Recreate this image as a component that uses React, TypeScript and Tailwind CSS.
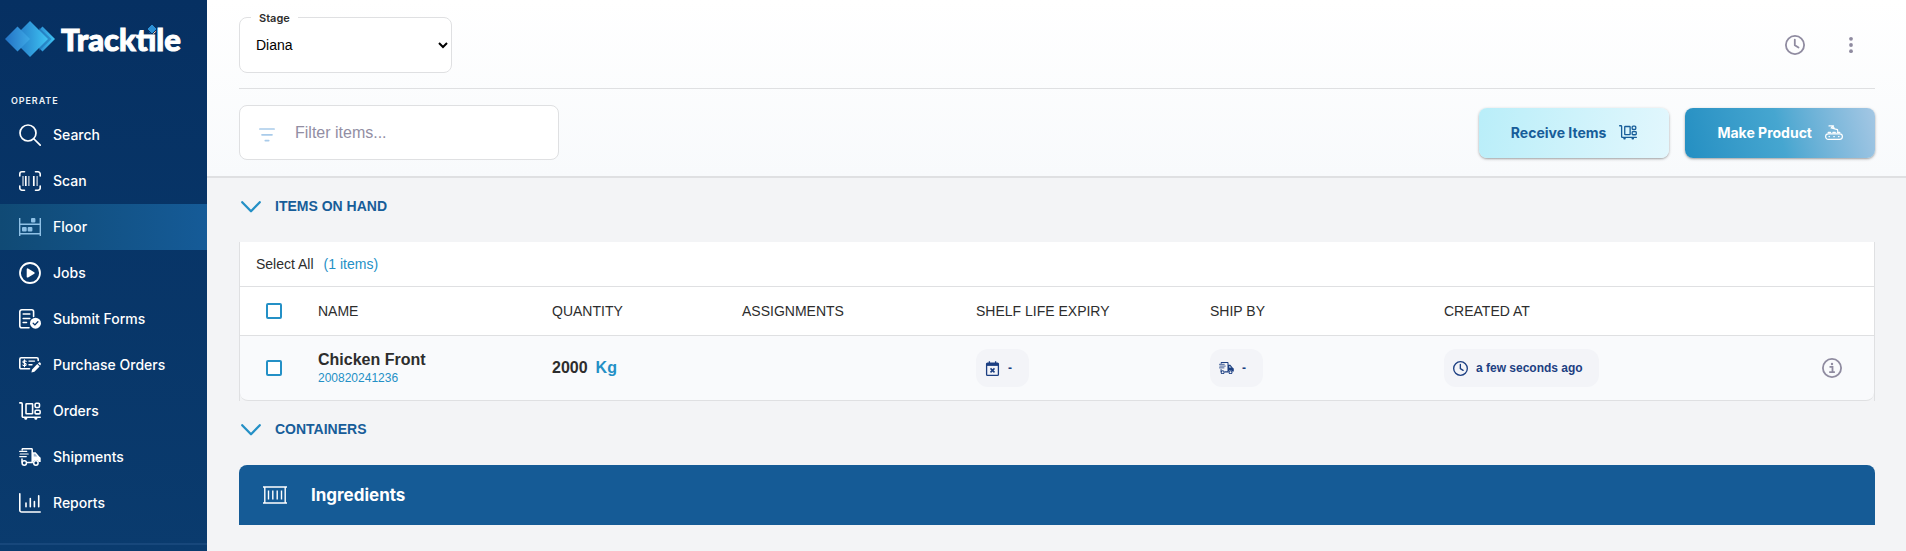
import type { ReactNode } from "react";

type IconProps = { className?: string };

function SearchIcon() {
  return (
    <svg viewBox="0 0 22 22" className="w-[22px]" fill="none" stroke="currentColor" strokeWidth="1.7" strokeLinecap="round">
      <circle cx="9" cy="9" r="8" />
      <path d="M15 15l6.2 6.2" />
    </svg>
  );
}

function ScanIcon() {
  return (
    <svg viewBox="0 0 22 20" className="w-[22px]" fill="none" stroke="currentColor">
      <path
        d="M.8 5V3A2.2 2.2 0 0 1 3 .8h2.5M16.5.8H19A2.2 2.2 0 0 1 21.2 3v2M21.2 15v2a2.2 2.2 0 0 1-2.2 2.2h-2.5M5.5 19.2H3A2.2 2.2 0 0 1 .8 17v-2"
        strokeWidth="1.6"
        strokeLinecap="round"
      />
      <path d="M4 5v10M9.9 5v10M18.1 5v10" strokeWidth="1" />
      <path d="M6.8 5v10M14.8 5v10" strokeWidth="1.7" />
    </svg>
  );
}

function FloorIcon() {
  return (
    <svg viewBox="0 0 22 18" className="w-[22px] text-[#8fc1e6]" fill="currentColor">
      <path d="M0 0h1.4v18H0zM20.6 0H22v18h-1.4z" />
      <path d="M1 5.6h20v1.3H1zM1 15h20v1.4H1z" />
      <rect x="12" y="0" width="4.4" height="4.6" rx="1" />
      <rect x="3" y="9" width="4.7" height="4.6" rx="1" />
      <rect x="8.7" y="9" width="4.7" height="4.6" rx="1" />
    </svg>
  );
}

function JobsIcon() {
  return (
    <svg viewBox="0 0 22 22" className="w-[22px]" fill="none" stroke="currentColor" strokeWidth="1.8">
      <circle cx="11" cy="11" r="10" />
      <path d="M8.6 7.3v7.4l6.2-3.7z" fill="currentColor" strokeLinejoin="round" />
    </svg>
  );
}

function FormsIcon() {
  return (
    <svg viewBox="0 0 22 20" className="w-[22px]" fill="none" stroke="currentColor" strokeWidth="1.6" strokeLinecap="round">
      <path d="M10 18.8H2.8a2 2 0 0 1-2-2v-14a2 2 0 0 1 2-2h9.8a2 2 0 0 1 2 2v4.7" />
      <path d="M4.2 5h6.6M4.2 9.5h6.6M4.2 13.5h3.3" />
      <circle cx="16.5" cy="14.2" r="5.5" fill="currentColor" stroke="none" />
      <path d="M14.2 14.3l1.7 1.6 3-3.2" stroke="#08356a" strokeWidth="1.3" />
    </svg>
  );
}

function PurchaseIcon() {
  return (
    <svg viewBox="0 0 22 16" className="w-[22px]" fill="none" stroke="currentColor" strokeWidth="1.6" strokeLinecap="round">
      <path d="M10.5 11.8H2.2A1.4 1.4 0 0 1 .8 10.4V2.2A1.4 1.4 0 0 1 2.2.8h15.6a1.4 1.4 0 0 1 1.4 1.4v1.3" />
      <path d="M7.2 4.3C6.6 3.6 4 3.3 3.9 4.9c0 1.6 3.3.9 3.3 2.6 0 1.5-2.7 1.4-3.4.5M5.5 2.8v7" strokeWidth="1.1" />
      <path d="M10 4.1h5.5M10 7.8h3" strokeWidth="1.4" />
      <path d="M12.4 15.6l.7-3.2 5.2-5.3 2.3 2.3-5.2 5.3zM19 6.4l.9-.9c.8-.6 2.5.9 1.9 1.9l-.7 1z" fill="currentColor" stroke="none" />
    </svg>
  );
}

function CartIcon({ className = "w-[22px]" }: IconProps) {
  return (
    <svg viewBox="0 0 22 18" className={className} fill="none" stroke="currentColor" strokeWidth="1.6" strokeLinecap="round">
      <path d="M.8.9h1.4a1 1 0 0 1 1 1v12.3a1 1 0 0 0 1 1h17" />
      <rect x="7" y="1.8" width="6.6" height="10" rx=".6" />
      <rect x="16.1" y="1.3" width="4.4" height="4.2" rx="1.2" />
      <rect x="16.1" y="8.2" width="5" height="3.7" rx="1" />
      <path d="M6.3 16.6h.9M16.4 16.6h.9" strokeWidth="2.2" />
    </svg>
  );
}

function TruckIcon({ className = "w-[22px]" }: IconProps) {
  return (
    <svg viewBox="0 0 22 18" className={className} fill="none" stroke="currentColor" strokeWidth="1.5" strokeLinecap="round">
      <path d="M3.2 2V1.4a.7.7 0 0 1 .7-.7h8.5a.8.8 0 0 1 .8.8v13H8.6M3 11v3" />
      <path d="M.7 3.4h7M1.2 6h8M.7 8.6h6.6" strokeWidth="1.2" />
      <path d="M13.2 4.2h3.4l3.9 4.6 1.2.9V14h-2a3 3 0 0 0-5.5-.5l-1 .5z" fill="currentColor" stroke="none" />
      <path d="M14.7 5.7h1.5l2.2 2.7h-3.7z" fill="#9fb6cf" stroke="none" />
      <circle cx="5.3" cy="15" r="2.2" />
      <circle cx="16.9" cy="15" r="2.2" />
    </svg>
  );
}

function ReportsIcon() {
  return (
    <svg viewBox="0 0 22 20" className="w-[22px]" fill="none" stroke="currentColor" strokeWidth="1.6" strokeLinecap="round">
      <path d="M.8.8v16.4a1.8 1.8 0 0 0 1.8 1.8h18.6" />
      <path d="M7 10v3.8M11.3 5.5v8.3M15.4 8.5v5.3M19.7 2.8v11" />
    </svg>
  );
}

function ConveyorIcon() {
  return (
    <svg viewBox="0 0 18 15" className="w-[18px]" fill="none" stroke="currentColor" strokeWidth="1.2" strokeLinecap="round">
      <rect x=".6" y="8.8" width="16.8" height="5.6" rx="2.8" />
      <path d="M4 11.6h.5M8.8 11.6h.5M13.5 11.6h.5" strokeWidth="1.3" />
      <path d="M4 .9h4L6.3 3l6.2 1.6M8 .9l1.3 2.6M12.5 4.6l.3 2" />
      <path d="M3.3 7.4h2.2M8 7.4h2.2M12.5 7.4h2.2" strokeWidth="1.5" />
    </svg>
  );
}

function ClockIcon({ className }: IconProps) {
  return (
    <svg viewBox="0 0 20 20" className={className} fill="none" stroke="currentColor" strokeWidth="1.8" strokeLinecap="round" strokeLinejoin="round">
      <circle cx="10" cy="10" r="9.1" />
      <path d="M9.8 4.6v5.6l3.7 2.3" />
    </svg>
  );
}

function CalendarIcon() {
  return (
    <svg viewBox="0 0 13 15" className="size-[15px]" fill="none" stroke="currentColor" strokeWidth="1.3">
      <rect x=".6" y="2.1" width="11.8" height="12.2" rx=".9" />
      <path d="M.6 2h11.8v2.9H.6z" fill="currentColor" stroke="none" />
      <path d="M3.4.3v2M9.6.3v2" />
      <path d="M4.5 7.4l4 4M8.5 7.4l-4 4" strokeWidth="1.5" />
    </svg>
  );
}

function InfoIcon() {
  return (
    <svg viewBox="0 0 20 20" className="w-5" fill="none" stroke="currentColor" strokeWidth="1.8">
      <circle cx="10" cy="10" r="9.1" />
      <path d="M7.5 8.8h3v5.3M7.2 14.2h5.7" />
      <circle cx="10" cy="6" r="1.2" fill="currentColor" stroke="none" />
    </svg>
  );
}

function ContainerIcon() {
  return (
    <svg viewBox="0 0 24 18" className="w-6" fill="none" stroke="currentColor" strokeWidth="1.4">
      <path d="M0 1h24M0 17h24M1.8 1v16M22.2 1v16" />
      <path d="M5.5 4.5v9M9.8 4.5v9M14.2 4.5v9M18.5 4.5v9" />
    </svg>
  );
}

function Logo() {
  return (
    <svg viewBox="0 0 50 36" className="w-[50px] shrink-0">
      <defs>
        <linearGradient id="tileLeft" x1="0" x2="1">
          <stop offset="0" stopColor="#2372c4" />
          <stop offset="1" stopColor="#3da9e6" />
        </linearGradient>
        <linearGradient id="tileMid" x1="0" x2="1">
          <stop offset="0" stopColor="#1f6fc0" />
          <stop offset="1" stopColor="#3fc3f3" />
        </linearGradient>
      </defs>
      <path d="M37.5 5.5L50 18 37.5 30.5 25 18z" fill="url(#tileMid)" />
      <path d="M34 6.5L46.5 18 34 30z" fill="#1c69ad" opacity=".5" />
      <path d="M25 0l18 18-18 18L7 18z" fill="url(#tileMid)" />
      <path d="M12.5 5.5L25 18 12.5 30.5 0 18z" fill="url(#tileLeft)" />
    </svg>
  );
}

const navItems: { label: string; icon: ReactNode; active?: boolean }[] = [
  { label: "Search", icon: <SearchIcon /> },
  { label: "Scan", icon: <ScanIcon /> },
  { label: "Floor", icon: <FloorIcon />, active: true },
  { label: "Jobs", icon: <JobsIcon /> },
  { label: "Submit Forms", icon: <FormsIcon /> },
  { label: "Purchase Orders", icon: <PurchaseIcon /> },
  { label: "Orders", icon: <CartIcon /> },
  { label: "Shipments", icon: <TruckIcon /> },
  { label: "Reports", icon: <ReportsIcon /> }
];

function Sidebar() {
  return (
    <aside className="w-[207px] shrink-0 bg-linear-to-b from-[#063062] to-[#0a3b6e] font-['Inter',sans-serif] text-white">
      <a href="#" className="flex h-[78px] items-center gap-[6px] pl-[5px]">
        <Logo />
        <span className="relative font-['Lato',sans-serif] text-[31px] leading-8 font-black [-webkit-text-stroke:1px_white]">
          Tracktile
          <svg viewBox="0 0 12 12" className="absolute top-0 right-[23px] w-3">
            <path d="M6 1l5 5-5 5-5-5z" fill="#2b8fd4" stroke="#073164" strokeWidth="1" />
          </svg>
        </span>
      </a>
      <h2 className="mt-4 pl-[11px] text-[9px] leading-[14px] font-semibold tracking-widest text-[#eef3f8]">OPERATE</h2>
      <nav className="mt-1 border-b-2 border-[#17477b] pb-[17px]">
        {navItems.map((item) => (
          <a
            key={item.label}
            href="#"
            className={
              item.active
                ? "flex h-[46px] items-center gap-3 bg-linear-to-r from-[#104a75] to-[#155b98] pl-[19px] text-sm font-medium"
                : "flex h-[46px] items-center gap-3 pl-[19px] text-sm font-medium"
            }
          >
            {item.icon}
            {item.label}
          </a>
        ))}
      </nav>
    </aside>
  );
}

function SectionTitle({ children }: { children: ReactNode }) {
  return (
    <button type="button" className="flex items-center gap-[14px] pl-[2px] text-sm font-bold text-[#175d99]">
      <svg viewBox="0 0 20 12" className="mt-[2px] w-5" fill="none" stroke="#2490c6" strokeWidth="2.3" strokeLinecap="round" strokeLinejoin="round">
        <path d="M1.2 1.2l8.8 9 8.8-9" />
      </svg>
      {children}
    </button>
  );
}

function Checkbox({ label }: { label: string }) {
  return (
    <input
      type="checkbox"
      aria-label={label}
      className="block size-4 appearance-none rounded-[2px] border-2 border-[#2490c6] bg-white checked:bg-[#2490c6]"
    />
  );
}

function Chip({ icon, children }: { icon: ReactNode; children: ReactNode }) {
  return (
    <span className="inline-flex h-[38px] min-w-[53px] items-center gap-2 rounded-xl bg-[#f3f4f8] pr-4 pl-[9px] align-middle text-xs font-bold text-[#1c3f82]">
      {icon}
      {children}
    </span>
  );
}

export default function App() {
  return (
    <div className="flex min-h-screen bg-[#f3f4f6] font-['Liberation_Sans',sans-serif] text-[#2d2d2d]">
      <Sidebar />
      <div className="min-w-0 flex-1">
        <header className="border-b-2 border-[#dfe0e2] bg-linear-to-b from-white to-[#f8fafc] pr-[31px] pl-8">
          <div className="flex h-[89px] items-center justify-between border-b border-[#dfe0e2]">
            <fieldset className="-mt-1 w-[213px] rounded-lg border border-[#dfe0e2] bg-white pb-1.5">
              <legend className="ml-[11px] px-2 font-['Inter',sans-serif] text-[11px] leading-3 font-semibold">
                <label htmlFor="stage">Stage</label>
              </legend>
              <select id="stage" className="block h-[42px] w-full bg-transparent pl-3 text-sm text-black">
                <option>Diana</option>
              </select>
            </fieldset>
            <div className="flex items-center gap-[36px] pt-0.5 pr-[14px] text-[#8f8ba0]">
              <button type="button" aria-label="History">
                <ClockIcon className="w-5" />
              </button>
              <button type="button" aria-label="More options">
                <svg viewBox="0 0 20 20" className="w-5" fill="currentColor">
                  <circle cx="10" cy="3.8" r="1.9" />
                  <circle cx="10" cy="10" r="1.9" />
                  <circle cx="10" cy="16.2" r="1.9" />
                </svg>
              </button>
            </div>
          </div>
          <div className="flex h-[87px] items-center justify-between">
            <label className="flex h-[55px] w-80 items-center gap-5 rounded-lg border border-[#dfe0e2] bg-white pl-[19px]">
              <svg viewBox="0 0 16 14" className="mt-1 w-4" fill="none" stroke="#a9cbea" strokeWidth="1.7" strokeLinecap="round">
                <path d="M.9 1h14.2M3 6.8h10M6.3 12.6h3.4" />
              </svg>
              <input
                type="text"
                aria-label="Filter items"
                placeholder="Filter items..."
                className="min-w-0 flex-1 bg-transparent text-base outline-none placeholder:text-[#928ea3]"
              />
            </label>
            <div className="flex gap-4 font-['Inter',sans-serif] text-sm font-bold">
              <button
                type="button"
                className="flex h-[50px] items-center gap-[13px] rounded-lg bg-linear-100 from-[#b9eef9] to-[#e2f7fd] px-8 text-[#175d99] shadow-sm shadow-black/30"
              >
                Receive Items
                <CartIcon className="w-[18px]" />
              </button>
              <button
                type="button"
                className="flex h-[50px] items-center gap-[13px] rounded-lg bg-linear-75 from-[#248fc2] via-[#46a6d0] to-[#a4c7e4] px-8 text-white shadow-sm shadow-black/30"
              >
                Make Product
                <ConveyorIcon />
              </button>
            </div>
          </div>
        </header>

        <main className="pt-[18px] pr-[31px] pb-6 pl-8">
          <SectionTitle>ITEMS ON HAND</SectionTitle>
          <section className="mt-[26px] border-x border-[#dfe0e2]">
            <div className="flex h-11 items-center gap-[10px] bg-white pl-4 text-sm">
              <span>Select All</span>
              <span className="text-[#2490c6]">(1 items)</span>
            </div>
            <table className="w-full table-fixed border-separate border-spacing-0 text-left">
              <colgroup>
                <col className="w-[78px]" />
                <col className="w-[234px]" />
                <col className="w-[190px]" />
                <col className="w-[234px]" />
                <col className="w-[234px]" />
                <col className="w-[234px]" />
                <col />
                <col className="w-[80px]" />
              </colgroup>
              <thead>
                <tr className="h-[49px] bg-white text-sm [&>th]:border-t [&>th]:border-[#dfe0e2] [&>th]:font-normal">
                  <th className="pl-[26px]">
                    <Checkbox label="Select all items" />
                  </th>
                  <th>NAME</th>
                  <th>QUANTITY</th>
                  <th>ASSIGNMENTS</th>
                  <th>SHELF LIFE EXPIRY</th>
                  <th>SHIP BY</th>
                  <th>CREATED AT</th>
                  <th aria-label="Details" />
                </tr>
              </thead>
              <tbody>
                <tr className="h-[66px] [&>td]:border-y [&>td]:border-[#dfe0e2] [&>td]:bg-[#f9fafc]">
                  <td className="rounded-bl-lg pl-[26px]">
                    <Checkbox label="Select Chicken Front" />
                  </td>
                  <td>
                    <div className="text-base leading-5 font-bold">Chicken Front</div>
                    <div className="text-xs leading-4 text-[#2490c6]">200820241236</div>
                  </td>
                  <td className="text-base font-bold">
                    <span className="mr-2">2000</span>
                    <span className="text-[#2490c6]">Kg</span>
                  </td>
                  <td />
                  <td>
                    <Chip icon={<CalendarIcon />}>-</Chip>
                  </td>
                  <td>
                    <Chip icon={<TruckIcon className="w-[15px]" />}>-</Chip>
                  </td>
                  <td>
                    <Chip icon={<ClockIcon className="w-[15px]" />}>a few seconds ago</Chip>
                  </td>
                  <td className="rounded-br-lg">
                    <button type="button" aria-label="Item details" className="ml-7 block text-[#8f8ba0]">
                      <InfoIcon />
                    </button>
                  </td>
                </tr>
              </tbody>
            </table>
          </section>
          <div className="mt-[18px]">
            <SectionTitle>CONTAINERS</SectionTitle>
          </div>
          <section className="mt-[26px] flex h-[60px] items-center gap-6 rounded-t-lg bg-[#155b96] pl-6 text-white">
            <ContainerIcon />
            <h3 className="font-['Inter',sans-serif] text-[17px] leading-6 font-bold">Ingredients</h3>
          </section>
        </main>
      </div>
    </div>
  );
}
